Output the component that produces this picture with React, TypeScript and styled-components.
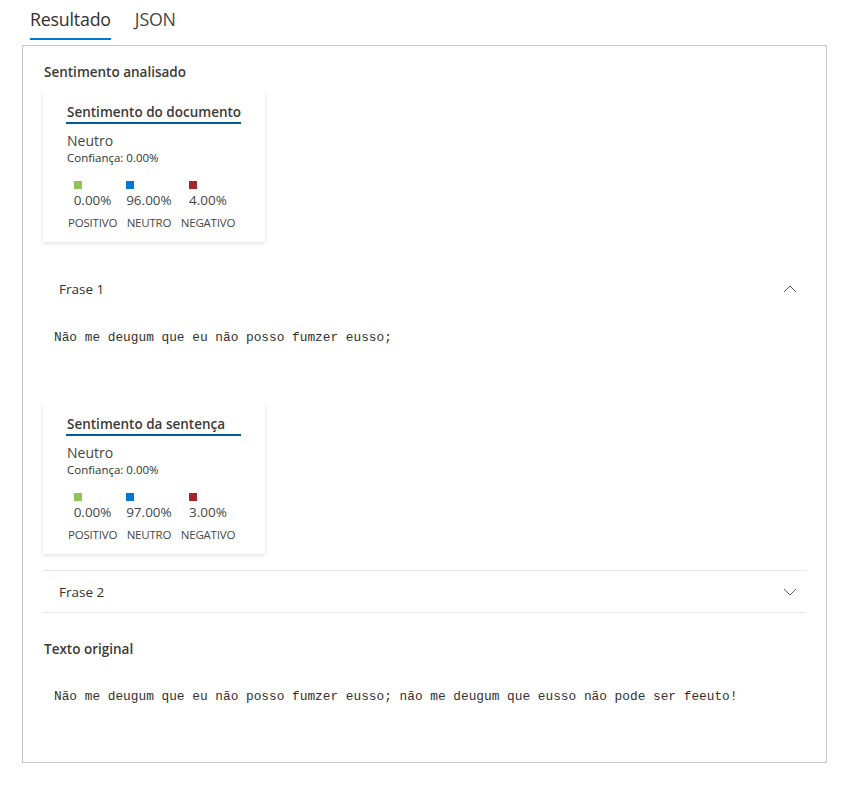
import React from "react";
import styled, { createGlobalStyle } from "styled-components";

const Global = createGlobalStyle`
  html, body { margin: 0; padding: 0; background: #ffffff; }
  body {
    font-family: "Open Sans", "Noto Sans", Arial, sans-serif;
    color: #323130;
    -webkit-font-smoothing: antialiased;
  }
`;

const Page = styled.div`
  padding: 0 22px 0 22px;
  width: 805px;
`;

const TabBar = styled.div`
  display: flex;
  gap: 24px;
  padding-left: 8px;
  height: 45px;
  box-sizing: border-box;
`;

const Tab = styled.div<{ $active?: boolean }>`
  font-size: 17.8px;
  line-height: 24px;
  padding-top: 7px;
  height: 40px;
  box-sizing: border-box;
  color: ${(p) => (p.$active ? "#323130" : "#484644")};
  border-bottom: 2px solid ${(p) => (p.$active ? "#0078d4" : "transparent")};
  font-weight: ${(p) => (p.$active ? 500 : 400)};
  letter-spacing: -0.2px;
`;

const Panel = styled.div`
  border: 1px solid #c8c8c8;
  height: 718px;
  box-sizing: border-box;
  padding: 16px 20px 0 20px;
  display: flex;
  flex-direction: column;
`;

const SectionTitle = styled.div<{ $mt?: number }>`
  font-size: 13.5px;
  line-height: 20px;
  font-weight: 600;
  color: #3b3a39;
  padding-left: 1px;
  margin-top: ${(p) => p.$mt ?? 0}px;
`;

const Card = styled.div<{ $mt?: number }>`
  width: 222px;
  height: 151px;
  box-sizing: border-box;
  margin-top: ${(p) => p.$mt ?? 0}px;
  box-shadow: 0 1.6px 3.6px rgba(0, 0, 0, 0.13), 0 0.3px 0.9px rgba(0, 0, 0, 0.11);
  background: #fff;
  padding: 12px 0 0 24px;
  display: flex;
  flex-direction: column;
  align-items: flex-start;
`;

const CardTitle = styled.div`
  font-size: 13.5px;
  line-height: 18px;
  font-weight: 600;
  color: #3b3a39;
  width: 175px;
  margin-left: -1px;
  padding-left: 1px;
  box-sizing: border-box;
  border-bottom: 2px solid #005a9e;
  padding-bottom: 1px;
  white-space: nowrap;
`;

const Label = styled.div`
  font-size: 14px;
  line-height: 18px;
  margin-top: 8px;
  color: #484644;
`;

const Confidence = styled.div`
  font-size: 11.5px;
  line-height: 16px;
  color: #323130;
`;

const Scores = styled.div`
  display: flex;
  gap: 9px;
  margin-top: 15px;
  margin-left: 1px;
`;

const ScoreCol = styled.div`
  display: flex;
  flex-direction: column;
  align-items: center;
`;

const ScoreInner = styled.div`
  display: flex;
  flex-direction: column;
  align-items: flex-start;
`;

const Swatch = styled.div<{ $c: string }>`
  width: 8px;
  height: 8px;
  background: ${(p) => p.$c};
`;

const Pct = styled.div`
  font-size: 13.5px;
  line-height: 20px;
  color: #484644;
  margin-top: 1px;
`;

const ScoreName = styled.div`
  font-size: 11.5px;
  line-height: 16px;
  color: #484644;
  margin-top: 5px;
  letter-spacing: -0.2px;
`;

const AccordionHeader = styled.div<{ $border?: boolean; $mt?: number }>`
  display: flex;
  align-items: center;
  justify-content: space-between;
  height: 43px;
  box-sizing: border-box;
  margin-top: ${(p) => p.$mt ?? 0}px;
  border-top: 1px solid ${(p) => (p.$border ? "#e8e8e8" : "transparent")};
  border-bottom: 1px solid ${(p) => (p.$border ? "#e8e8e8" : "transparent")};
  padding: 0 9px 0 16px;
  font-size: 13.5px;
  color: #323130;
`;

const Mono = styled.div<{ $mt?: number }>`
  font-family: "Liberation Mono", "DejaVu Sans Mono", monospace;
  font-size: 12.8px;
  line-height: 18px;
  color: #323130;
  padding-left: 11px;
  margin-top: ${(p) => p.$mt ?? 0}px;
  white-space: pre;
`;

const Chevron = ({ up }: { up?: boolean }) => (
  <svg width="14" height="8" viewBox="0 0 14 8" fill="none">
    <path
      d={up ? "M1 7 L7 1 L13 7" : "M1 1 L7 7 L13 1"}
      stroke="#605e5c"
      strokeWidth="1"
    />
  </svg>
);

type Score = { name: string; value: string; color: string };

const SentimentCard = ({
  title,
  scores,
  mt,
}: {
  title: string;
  scores: Score[];
  mt?: number;
}) => (
  <Card $mt={mt}>
    <CardTitle>{title}</CardTitle>
    <Label>Neutro</Label>
    <Confidence>Confiança: 0.00%</Confidence>
    <Scores>
      {scores.map((s) => (
        <ScoreCol key={s.name}>
          <ScoreInner>
            <Swatch $c={s.color} />
            <Pct>{s.value}</Pct>
          </ScoreInner>
          <ScoreName>{s.name}</ScoreName>
        </ScoreCol>
      ))}
    </Scores>
  </Card>
);

const GREEN = "#92c353";
const BLUE = "#0078d4";
const RED = "#a4262c";

export default function App() {
  return (
    <>
      <Global />
      <Page>
        <TabBar>
          <Tab $active>Resultado</Tab>
          <Tab>JSON</Tab>
        </TabBar>
        <Panel>
          <SectionTitle>Sentimento analisado</SectionTitle>
          <SentimentCard
            mt={9}
            title="Sentimento do documento"
            scores={[
              { name: "POSITIVO", value: "0.00%", color: GREEN },
              { name: "NEUTRO", value: "96.00%", color: BLUE },
              { name: "NEGATIVO", value: "4.00%", color: RED },
            ]}
          />
          <AccordionHeader $mt={25}>
            <span>Frase 1</span>
            <Chevron up />
          </AccordionHeader>
          <Mono $mt={19}>Não me deugum que eu não posso fumzer eusso;</Mono>
          <SentimentCard
            mt={56}
            title="Sentimento da sentença"
            scores={[
              { name: "POSITIVO", value: "0.00%", color: GREEN },
              { name: "NEUTRO", value: "97.00%", color: BLUE },
              { name: "NEGATIVO", value: "3.00%", color: RED },
            ]}
          />
          <AccordionHeader $border $mt={16}>
            <span>Frase 2</span>
            <Chevron />
          </AccordionHeader>
          <SectionTitle $mt={26}>Texto original</SectionTitle>
          <Mono $mt={29}>
            Não me deugum que eu não posso fumzer eusso; não me deugum que eusso não pode ser feeuto!
          </Mono>
        </Panel>
      </Page>
    </>
  );
}
